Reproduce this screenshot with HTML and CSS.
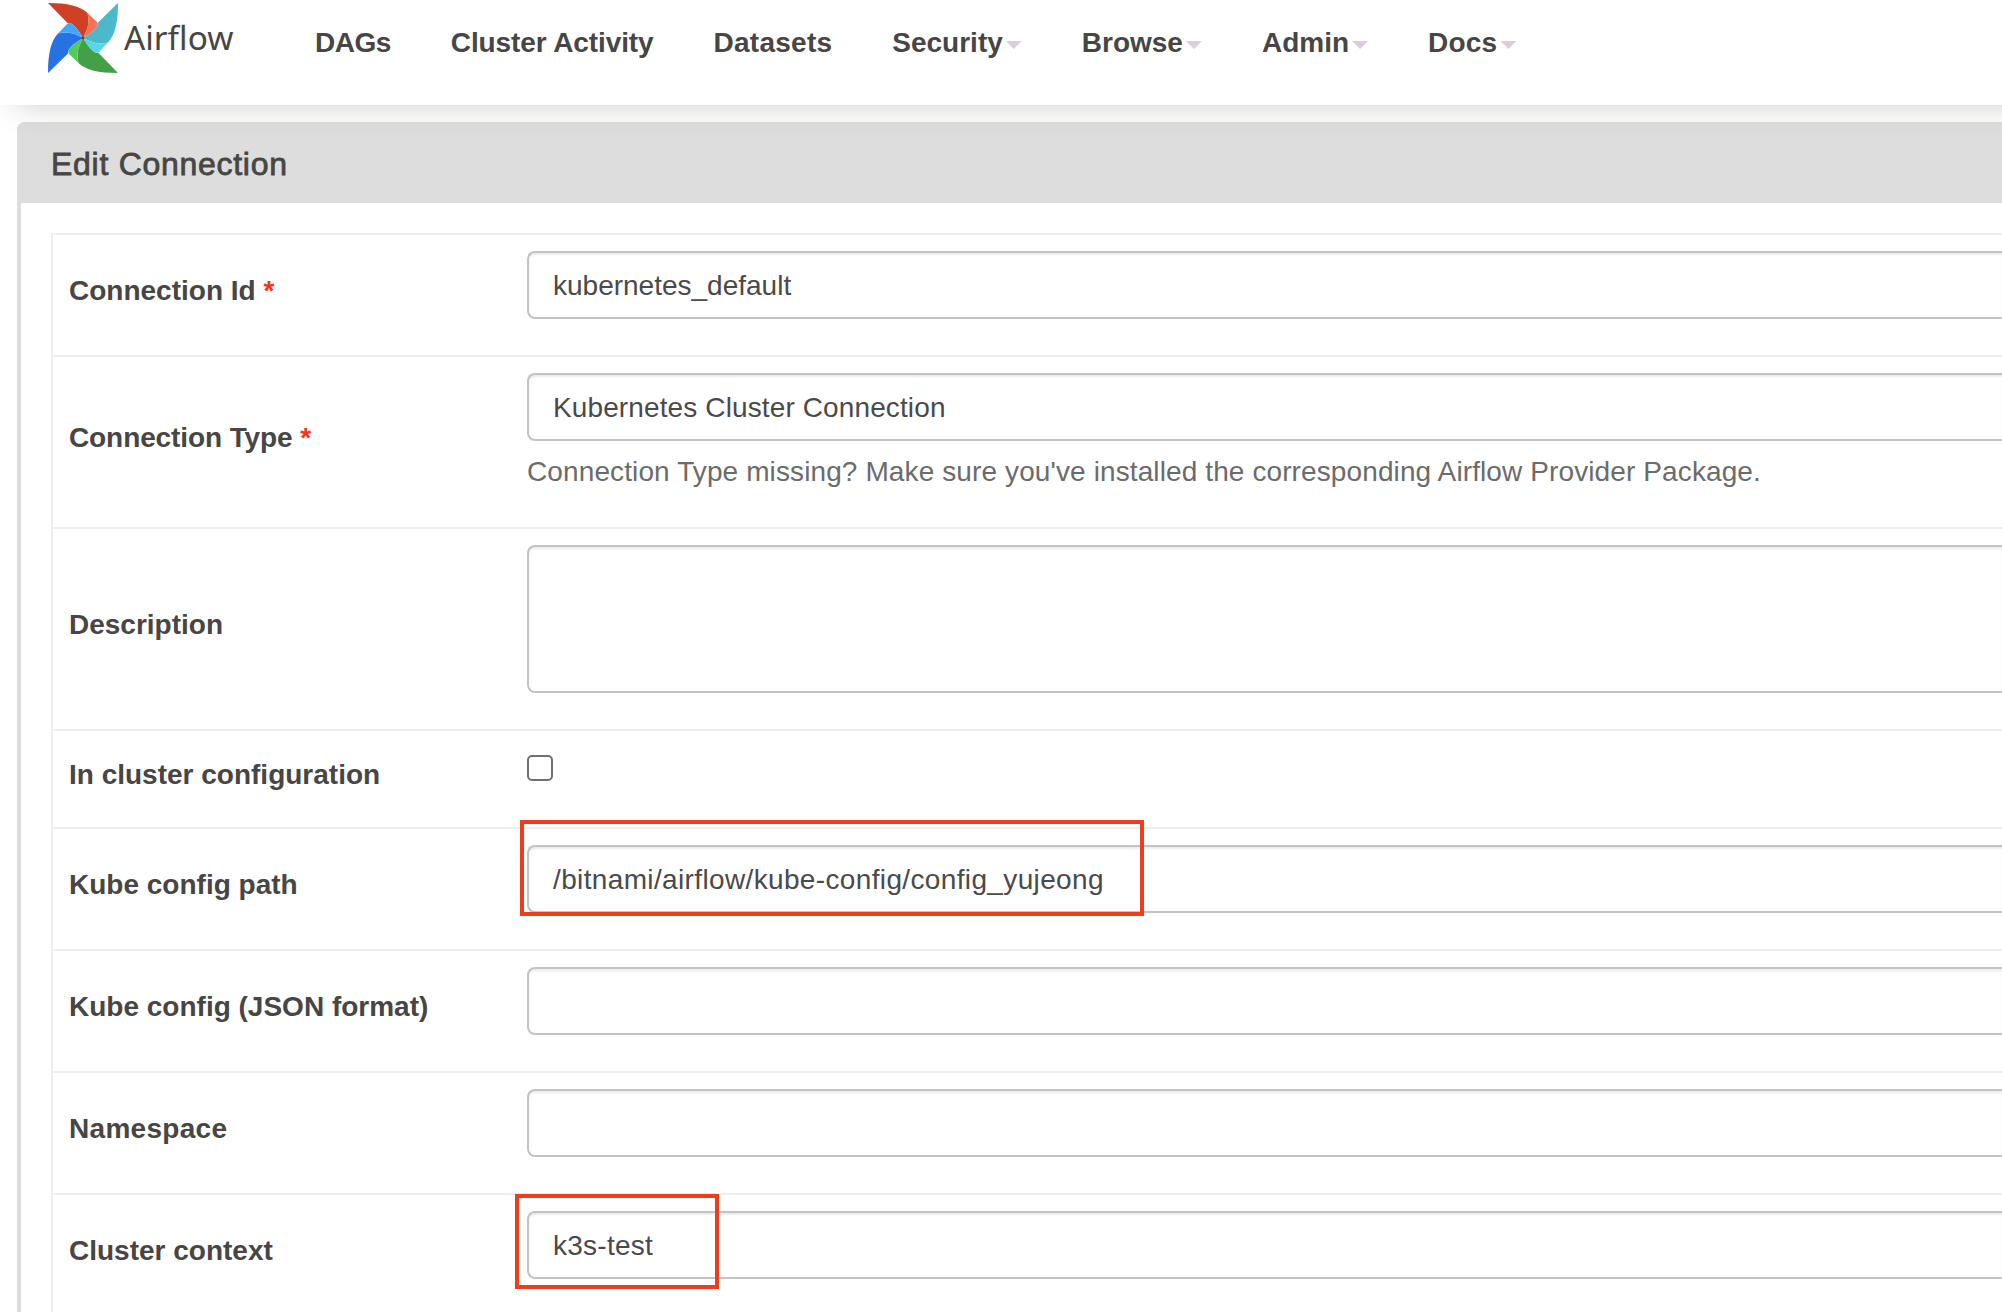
FILE: index.html
```html
<!DOCTYPE html>
<html lang="en">
<head>
<meta charset="utf-8">
<title>Edit Connection - Airflow</title>
<link rel="stylesheet" href="styles.css">
</head>
<body>
<header class="navbar">
  <a class="brand">
    <svg class="brand-mark" viewBox="-36 -36 72 72" aria-hidden="true">
      <g><path fill="#cf4127" d="M-35 -35C-15 -35 -3 -32 4.5 -25C7 -14 4 -8 0 0Q-7 -12 -12 -14.5Q-14 -15.3 -15.5 -15Z"/><path fill="#f07455" d="M4.5 -25L14 -16Q15.5 -14.5 14.5 -12Q12 -7 0 0C4 -8 7 -14 4.5 -25Z"/></g>
      <g transform="rotate(90)"><path fill="#4bb9cb" d="M-35 -35C-15 -35 -3 -32 4.5 -25C7 -14 4 -8 0 0Q-7 -12 -12 -14.5Q-14 -15.3 -15.5 -15Z"/><path fill="#57d8e6" d="M4.5 -25L14 -16Q15.5 -14.5 14.5 -12Q12 -7 0 0C4 -8 7 -14 4.5 -25Z"/></g>
      <g transform="rotate(180)"><path fill="#43a047" d="M-35 -35C-15 -35 -3 -32 4.5 -25C7 -14 4 -8 0 0Q-7 -12 -12 -14.5Q-14 -15.3 -15.5 -15Z"/><path fill="#51cc58" d="M4.5 -25L14 -16Q15.5 -14.5 14.5 -12Q12 -7 0 0C4 -8 7 -14 4.5 -25Z"/></g>
      <g transform="rotate(270)"><path fill="#2672e4" d="M-35 -35C-15 -35 -3 -32 4.5 -25C7 -14 4 -8 0 0Q-7 -12 -12 -14.5Q-14 -15.3 -15.5 -15Z"/><path fill="#42a8fb" d="M4.5 -25L14 -16Q15.5 -14.5 14.5 -12Q12 -7 0 0C4 -8 7 -14 4.5 -25Z"/></g>
      <circle r="1.4" fill="#474644"/>
    </svg>
    <span class="brand-name">Airflow</span>
  </a>
  <nav class="menu">
    <a class="menu-item menu-dags">DAGs</a>
    <a class="menu-item menu-activity">Cluster Activity</a>
    <a class="menu-item menu-datasets">Datasets</a>
    <a class="menu-item">Security<i class="caret"></i></a>
    <a class="menu-item">Browse<i class="caret"></i></a>
    <a class="menu-item">Admin<i class="caret"></i></a>
    <a class="menu-item menu-docs">Docs<i class="caret"></i></a>
  </nav>
</header>
<main class="panel">
  <h1 class="panel-heading">Edit Connection</h1>
  <form class="fields">
    <div class="row">
      <label class="label">Connection Id <span class="required">*</span></label>
      <div class="cell"><input class="control" type="text" value="kubernetes_default"></div>
    </div>
    <div class="row row-type">
      <label class="label label-type">Connection Type <span class="required">*</span></label>
      <div class="cell"><input class="control control-type" type="text" value="Kubernetes Cluster Connection">
        <p class="help">Connection Type missing? Make sure you've installed the corresponding Airflow Provider Package.</p></div>
    </div>
    <div class="row row-area">
      <label class="label">Description</label>
      <div class="cell"><textarea class="control control-area"></textarea></div>
    </div>
    <div class="row row-check">
      <label class="label">In cluster configuration</label>
      <div class="cell"><input class="check" type="checkbox"></div>
    </div>
    <div class="row">
      <label class="label">Kube config path</label>
      <div class="cell"><input class="control control-path" type="text" value="/bitnami/airflow/kube-config/config_yujeong"><span class="mark mark-path"></span></div>
    </div>
    <div class="row">
      <label class="label">Kube config (JSON format)</label>
      <div class="cell"><input class="control" type="text"></div>
    </div>
    <div class="row">
      <label class="label label-namespace">Namespace</label>
      <div class="cell"><input class="control" type="text"></div>
    </div>
    <div class="row">
      <label class="label">Cluster context</label>
      <div class="cell"><input class="control control-context" type="text" value="k3s-test"><span class="mark mark-context"></span></div>
    </div>
  </form>
</main>
</body>
</html>
```
FILE: styles.css
```css
* { box-sizing: border-box; }

html { overflow: hidden; }

body {
  margin: 0;
  height: 1312px;
  overflow: hidden;
  background: #fff;
  color: #474644;
  font: 28px/40px "Liberation Sans", Arial, sans-serif;
}

.navbar {
  position: relative;
  z-index: 1;
  display: flex;
  width: calc(100% + 60px);
  height: 105px;
  padding-left: 47px;
  background: #fff;
  box-shadow: 0 15px 30px -15px rgba(71, 70, 60, 0.27);
}

.brand { display: flex; width: 238px; }
.brand-mark { width: 72px; height: 72px; margin-top: 1.5px; flex: none; }
.brand-name {
  margin: 17px 0 0 5px;
  font: 33.3px/40px "Noto Sans", sans-serif;
}

.menu { display: flex; }
.menu-item {
  display: flex;
  padding: 23px 30px 0;
  height: 105px;
  font-weight: 700;
  white-space: nowrap;
}
.menu-dags { letter-spacing: -0.5px; }
.menu-activity { letter-spacing: -0.1px; }
.menu-datasets { letter-spacing: 0.25px; }
.menu-docs { letter-spacing: 0.2px; }
.caret {
  margin: 18px 0 0 3px;
  width: 16px;
  height: 8px;
  background: #dbcedc;
  clip-path: polygon(0 0, 100% 0, 50% 100%);
}

.panel {
  margin: 17px 0 0 17px;
  border-left: 4px solid #ddd;
  border-radius: 8px 0 0 0;
}
.panel-heading {
  height: 81px;
  margin: 0 0 0 -4px;
  padding: 22px 0 0 34px;
  border-radius: 8px 0 0 0;
  background: #ddd;
  font-size: 32px;
  font-weight: 400;
  line-height: 40px;
  letter-spacing: 0.72px;
  -webkit-text-stroke: 0.8px #474644;
}

.fields {
  margin: 30px 0 0 30px;
  border-left: 2px solid #eee;
}
.row {
  display: flex;
  align-items: center;
  height: 122px;
  border-top: 2px solid #eee;
}
.row-type { height: 172px; }
.row-area { height: 202px; }
.row-check { height: 98px; }

.label {
  width: 458px;
  padding: 2px 16px 10px;
  font-weight: 700;
}
.label-type { letter-spacing: -0.1px; }
.label-namespace { letter-spacing: 0.3px; }
.required { color: #f5331b; }

.cell {
  position: relative;
  flex: 1;
  align-self: stretch;
  margin-left: 16px;
  padding-top: 16px;
}
.control {
  display: block;
  width: 100%;
  height: 68px;
  margin: 0;
  padding: 2px 24px 0;
  border: 2px solid #c3c3c3;
  border-right: 0;
  border-radius: 8px 0 0 8px;
  outline: 0;
  background: #fff;
  box-shadow: inset 0 2px 2px rgba(0, 0, 0, 0.075);
  color: #4a4a4a;
  font: inherit;
  resize: none;
}
.control-area { height: 148px; }
.control-type { letter-spacing: 0.12px; }
.control-path { letter-spacing: 0.36px; }
.control-context { letter-spacing: 0.25px; }
.help {
  margin: 11px 0 0;
  color: #6b6b6b;
  letter-spacing: 0.11px;
  white-space: nowrap;
}

.check {
  appearance: none;
  display: block;
  width: 26px;
  height: 26px;
  margin: 8px 0 0;
  border: 2px solid #707070;
  border-radius: 5px;
}

/* Callout frames drawn over the highlighted values */
.mark { position: absolute; border: 4px solid #ee3c1c; }
.mark-path { left: -7px; top: -9px; width: 624px; height: 96px; }
.mark-context { left: -12px; top: -1px; width: 204px; height: 95px; }
```
